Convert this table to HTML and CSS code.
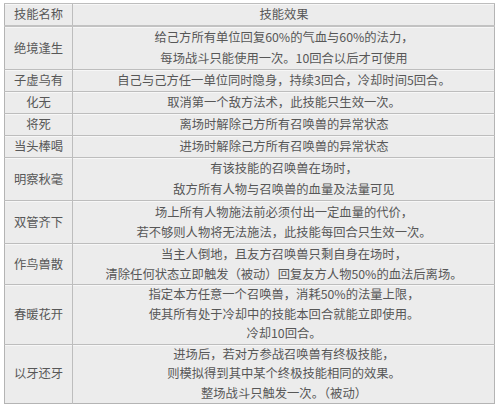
FILE: index.html
```html
<!DOCTYPE html>
<html lang="zh-CN">
<head>
<meta charset="utf-8">
<title>技能</title>
<link rel="stylesheet" href="styles.css">
</head>
<body>
<table class="skills">
  <tr class="r1 head"><td class="name">技能名称</td><td class="eff">技能效果</td></tr>
  <tr class="r2"><td class="name">绝境逢生</td><td class="eff">给己方所有单位回复60%的气血与60%的法力，<br>每场战斗只能使用一次。10回合以后才可使用</td></tr>
  <tr class="r1"><td class="name">子虚乌有</td><td class="eff">自己与己方任一单位同时隐身，持续3回合，冷却时间5回合。</td></tr>
  <tr class="r1b"><td class="name">化无</td><td class="eff">取消第一个敌方法术，此技能只生效一次。</td></tr>
  <tr class="r1"><td class="name">将死</td><td class="eff">离场时解除己方所有召唤兽的异常状态</td></tr>
  <tr class="r1b"><td class="name">当头棒喝</td><td class="eff">进场时解除己方所有召唤兽的异常状态</td></tr>
  <tr class="r2"><td class="name">明察秋毫</td><td class="eff">有该技能的召唤兽在场时，<br>敌方所有人物与召唤兽的血量及法量可见</td></tr>
  <tr class="r2 tight"><td class="name">双管齐下</td><td class="eff">场上所有人物施法前必须付出一定血量的代价，<br>若不够则人物将无法施法，此技能每回合只生效一次。</td></tr>
  <tr class="r2s tight"><td class="name">作鸟兽散</td><td class="eff">当主人倒地，且友方召唤兽只剩自身在场时，<br>清除任何状态立即触发（被动）回复友方人物50%的血法后离场。</td></tr>
  <tr class="r3 tight"><td class="name">春暖花开</td><td class="eff">指定本方任意一个召唤兽，消耗50%的法量上限，<br>使其所有处于冷却中的技能本回合就能立即使用。<br>冷却10回合。</td></tr>
  <tr class="r3 tight"><td class="name">以牙还牙</td><td class="eff">进场后，若对方参战召唤兽有终极技能，<br>则模拟得到其中某个终极技能相同的效果。<br>整场战斗只触发一次。（被动）</td></tr>
</table>
</body>
</html>
```
FILE: styles.css
```css
html, body {
  margin: 0;
  padding: 0;
  background: #ffffff;
}
body {
  padding: 3px 0 0 4px;
  font-family: "Noto Sans CJK SC", "Noto Sans", sans-serif;
  font-size: 12.3px;
  color: #575757;
}
.skills {
  width: 491px;
  border-collapse: collapse;
  background: #ececec;
  border: 1px solid #b4b4b4;
}
.skills td {
  padding: 0;
  text-align: center;
  vertical-align: middle;
  line-height: 21px;
  border-top: 1px solid #bdbdbd;
  box-shadow: inset 0 1px 0 #f7f7f7;
}
.skills .name {
  width: 67px;
  border-right: 1px solid #bdbdbd;
}
.skills .eff {
  padding-left: 1px;
}
.skills .head td {
  border-bottom: 2px solid #c2c2c2;
}
.r1 { height: 21px; }
.r1b { height: 22px; }
.r2 { height: 43px; }
.r2s { height: 41px; }
.r3 { height: 58px; }
.tight td { line-height: 20px; }
.r3 td { line-height: 19.5px; }
```
